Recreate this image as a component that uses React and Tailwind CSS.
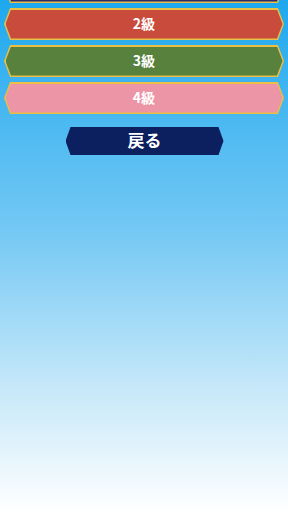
import React from "react";

function LevelButton({ label, bg, extra = "" }) {
  return (
    <div className={`h-[32px] bg-[#e9bf45] p-[1.5px] [clip-path:polygon(6px_0,calc(100%_-_6px)_0,100%_50%,calc(100%_-_6px)_100%,6px_100%,0_50%)] ${extra}`}>
      <div className={`h-full w-full flex items-center justify-center [clip-path:polygon(5.5px_0,calc(100%_-_5.5px)_0,100%_50%,calc(100%_-_5.5px)_100%,5.5px_100%,0_50%)] ${bg}`}>
        <span className="text-white font-bold text-[14px] leading-none -mt-[3px]">{label}</span>
      </div>
    </div>
  );
}

export default function App() {
  return (
    <div
      className="w-[288px] h-[512px] overflow-hidden bg-[linear-gradient(to_bottom,#1ea8ee_0%,#74c8f4_45%,#c4e7f9_75%,#ffffff_100%)]"
      style={{ fontFamily: '"Noto Sans CJK JP", "Noto Sans", sans-serif' }}
    >
      <div className="flex flex-col gap-[5px] px-[4px]">
        <LevelButton label="1級" bg="bg-[#2d2b6c]" extra="-mt-[29px]" />
        <LevelButton label="2級" bg="bg-[#c84b3c]" />
        <LevelButton label="3級" bg="bg-[#58813e]" />
        <LevelButton label="4級" bg="bg-[#ec95a6]" />
      </div>
      <div className="flex justify-center mt-[13px] pl-[1px]">
        <div className="w-[158px] h-[28px] bg-[#0c1f5e] flex items-center justify-center [clip-path:polygon(5px_0,calc(100%_-_5px)_0,100%_50%,calc(100%_-_5px)_100%,5px_100%,0_50%)]">
          <span className="text-white font-bold text-[17px] leading-none -mt-[3px]">戻る</span>
        </div>
      </div>
    </div>
  );
}
